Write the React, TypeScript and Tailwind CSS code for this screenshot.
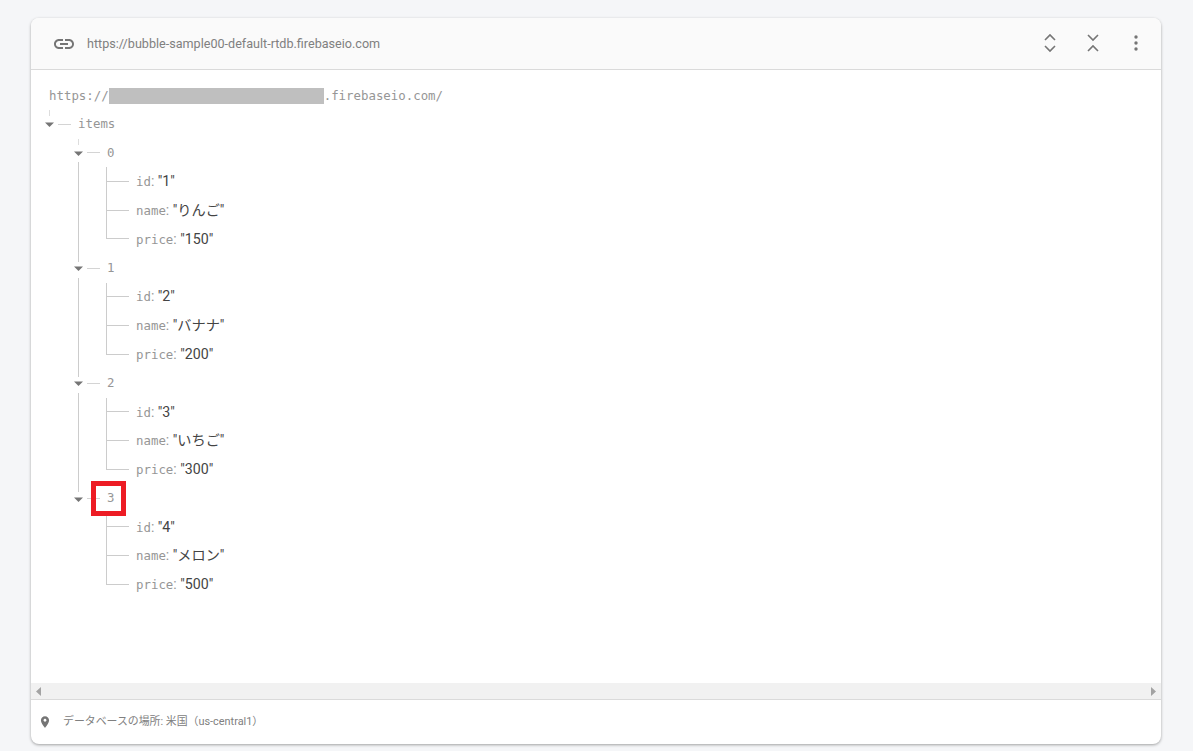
import React from "react";

const mono = "font-['DejaVu_Sans_Mono',monospace]";
const sans = "font-['Roboto','Noto_Sans_CJK_JP',sans-serif]";

const nodes = [
  { key: "0", id: "1", name: "りんご", price: "150" },
  { key: "1", id: "2", name: "バナナ", price: "200" },
  { key: "2", id: "3", name: "いちご", price: "300" },
  { key: "3", id: "4", name: "メロン", price: "500" },
];

function Caret() {
  return (
    <svg width="9" height="5" viewBox="0 0 9 5" className="shrink-0 mt-px">
      <path d="M0 0.5h9L4.5 5z" fill="#757575" />
    </svg>
  );
}

function NodeRow({ label, stub, marked }: { label: string; stub?: boolean; marked?: boolean }) {
  return (
    <div className="relative flex h-[28.8px] items-center">
      {stub && <span className="absolute left-[4px] top-0 h-[6px] w-px bg-[#dddddd]" />}
      <Caret />
      <span className="ml-[4px] h-px w-[13px] bg-[#d4d4d4]" />
      <span className={`ml-[7px] text-[12.4px] text-[#969696] ${mono}`}>{label}</span>
      {marked && (
        <span className="absolute left-[17px] top-[-3px] h-[35px] w-[35px] border-[5px] border-[#ed1c24]" />
      )}
    </div>
  );
}

function Leaf({ k, v, last }: { k: string; v: string; last?: boolean }) {
  return (
    <div className="flex h-[28.8px] items-center">
      <div className="flex h-full w-[23px] shrink-0 flex-col">
        <div className="h-1/2 border-b border-l border-[#cccccc]" />
        <div className={last ? "h-1/2" : "h-1/2 border-l border-[#cccccc]"} />
      </div>
      <span className="ml-[7px] flex items-baseline whitespace-pre">
        <span className={`text-[12.4px] text-[#969696] ${mono}`}>{k}</span>
        <span className={`text-[14px] text-[#969696] ${sans}`}>: </span>
        <span className={`text-[14.2px] text-[#444444] ${sans}`}>"{v}"</span>
      </span>
    </div>
  );
}

function ItemNode({ n, index }: { n: (typeof nodes)[number]; index: number }) {
  const last = index === nodes.length - 1;
  return (
    <div>
      <NodeRow label={n.key} stub={index === 0} marked={last} />
      <div
        className={`ml-[4px] -mt-[5px] -mb-[8px] pt-[5px] pb-[8px] pl-[27px] ${
          last ? "" : "border-l border-[#cccccc]"
        }`}
      >
        <div className={last ? "ml-px" : ""}>
          <Leaf k="id" v={n.id} />
          <Leaf k="name" v={n.name} />
          <Leaf k="price" v={n.price} last />
        </div>
      </div>
    </div>
  );
}

export default function App() {
  return (
    <div className={`flex h-[751px] w-[1193px] flex-col bg-[#f5f6f8] pl-[31px] pr-[32px] pt-[18px] pb-[7px] ${sans}`}>
      <div className="flex flex-1 flex-col overflow-hidden rounded-lg bg-white shadow-[0_1px_3px_rgba(0,0,0,0.35)]">
        <header className="flex h-[52px] shrink-0 items-center border-b border-[#dadada] bg-[#fafafa] pl-[21px] pr-[13px]">
          <svg width="24" height="24" viewBox="0 0 24 24" fill="#757575">
            <path d="M3.9 12c0-1.71 1.39-3.1 3.1-3.1h4V7H7c-2.76 0-5 2.24-5 5s2.24 5 5 5h4v-1.9H7c-1.71 0-3.1-1.39-3.1-3.1zM8 13h8v-2H8v2zm9-6h-4v1.9h4c1.71 0 3.1 1.39 3.1 3.1s-1.39 3.1-3.1 3.1h-4V17h4c2.76 0 5-2.24 5-5s-2.24-5-5-5z" />
          </svg>
          <span className="ml-[11px] mt-px text-[12.6px] text-[#808080]">https://bubble-sample00-default-rtdb.firebaseio.com</span>
          <div className="ml-auto mb-px flex items-center gap-[19px]">
            <svg width="24" height="24" viewBox="0 0 24 24" fill="none" stroke="#757575" strokeWidth="1.6">
              <path d="M7 9l5-5 5 5M7 15l5 5 5-5" />
            </svg>
            <svg width="24" height="24" viewBox="0 0 24 24" fill="none" stroke="#757575" strokeWidth="1.6">
              <path d="M7 4l5 5 5-5M7 20l5-5 5 5" />
            </svg>
            <svg width="24" height="24" viewBox="0 0 24 24" fill="#757575">
              <circle cx="12" cy="6" r="1.7" />
              <circle cx="12" cy="12" r="1.7" />
              <circle cx="12" cy="18" r="1.7" />
            </svg>
          </div>
        </header>

        <main className="flex-1 overflow-hidden pl-[14px] pt-[12.6px]">
          <div className={`flex h-[27.2px] items-center pl-[4px] text-[12.4px] text-[#969696] ${mono}`}>
            <span>https://</span>
            <span className="h-4 w-[215px] bg-[#bfbfbf]" />
            <span>.firebaseio.com/</span>
          </div>
          <NodeRow label="items" stub />
          <div className="ml-[29px]">
            {nodes.map((n, i) => (
              <ItemNode key={n.key} n={n} index={i} />
            ))}
          </div>
        </main>

        <div className="flex h-[17px] shrink-0 items-center justify-between border-b border-[#dadada] bg-[#f1f1f1] px-[5px]">
          <svg width="5" height="9" viewBox="0 0 5 9"><path d="M5 0v9L0 4.5z" fill="#a3a3a3" /></svg>
          <svg width="5" height="9" viewBox="0 0 5 9"><path d="M0 0v9l5-4.5z" fill="#a3a3a3" /></svg>
        </div>

        <footer className="flex h-[44px] shrink-0 items-center pl-[7px]">
          <svg width="14" height="14" viewBox="0 0 24 24" fill="#757575">
            <path d="M12 2C8.13 2 5 5.13 5 9c0 5.25 7 13 7 13s7-7.75 7-13c0-3.87-3.13-7-7-7zm0 9.5c-1.38 0-2.5-1.12-2.5-2.5s1.12-2.5 2.5-2.5 2.5 1.12 2.5 2.5-1.12 2.5-2.5 2.5z" />
          </svg>
          <span className="ml-[11px] text-[10.9px] text-[#808080]">データベースの場所: 米国（us-central1）</span>
        </footer>
      </div>
    </div>
  );
}
